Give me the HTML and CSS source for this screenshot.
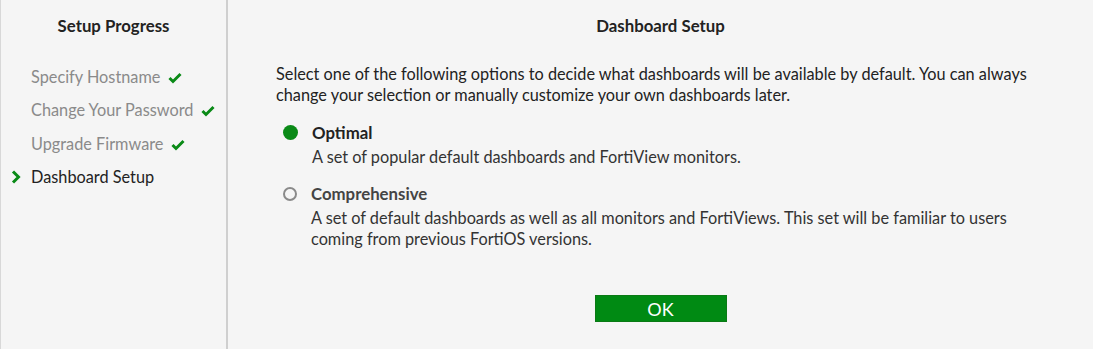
FILE: index.html
```html
<!DOCTYPE html>
<html lang="en">

<head>
  <meta charset="UTF-8">
  <meta name="viewport" content="width=device-width, initial-scale=1.0">
  <title>Dashboard Setup</title>
  <link rel="stylesheet" href="styles.css">
</head>

<body>
  <div class="wizard">
    <!-- Progress sidebar -->
    <aside class="progress">
      <h2 class="panel-title">Setup Progress</h2>
      <ul class="steps">
        <li class="step done">Specify Hostname
          <svg class="check" width="14" height="12" viewBox="0 0 14 12"><path d="M1.5 6 L5 9.5 L12.5 2" fill="none" stroke="#0a8a17" stroke-width="3"/></svg>
        </li>
        <li class="step done">Change Your Password
          <svg class="check" width="14" height="12" viewBox="0 0 14 12"><path d="M1.5 6 L5 9.5 L12.5 2" fill="none" stroke="#0a8a17" stroke-width="3"/></svg>
        </li>
        <li class="step done">Upgrade Firmware
          <svg class="check" width="14" height="12" viewBox="0 0 14 12"><path d="M1.5 6 L5 9.5 L12.5 2" fill="none" stroke="#0a8a17" stroke-width="3"/></svg>
        </li>
        <li class="step current">
          <svg class="chevron" width="10" height="14" viewBox="0 0 10 14"><path d="M2 1.5 L7.5 7 L2 12.5" fill="none" stroke="#0a8a17" stroke-width="3"/></svg>
          Dashboard Setup
        </li>
      </ul>
    </aside>

    <!-- Main content -->
    <main class="content">
      <h2 class="panel-title">Dashboard Setup</h2>
      <p class="intro">Select one of the following options to decide what dashboards will be available by default. You can always change your selection or manually customize your own dashboards later.</p>

      <div class="options">
        <label class="option">
          <span class="radio checked"></span>
          <span class="option-text">
            <span class="option-name">Optimal</span>
            <span class="option-desc">A set of popular default dashboards and FortiView monitors.</span>
          </span>
        </label>
        <label class="option">
          <span class="radio"></span>
          <span class="option-text">
            <span class="option-name">Comprehensive</span>
            <span class="option-desc">A set of default dashboards as well as all monitors and FortiViews. This set will be familiar to users coming from previous FortiOS versions.</span>
          </span>
        </label>
      </div>

      <div class="actions">
        <button class="ok-btn">OK</button>
      </div>
    </main>
  </div>
</body>

</html>
```

FILE: styles.css
```css
body {
  margin: 0;
  background: #f5f5f5;
  font-family: 'Lato', 'Open Sans', sans-serif;
  color: #333;
}

.wizard {
  display: flex;
  height: 349px;
  border-left: 1px solid #d8d8d8;
}

/* Sidebar */
.progress {
  width: 225px;
  flex-shrink: 0;
  border-right: 2px solid #cfcfcf;
}

.panel-title {
  margin: 0;
  padding-top: 16px;
  height: 20px;
  font-size: 16.8px;
  font-weight: bold;
  text-align: center;
  color: #222;
  line-height: 20px;
}

.steps {
  list-style: none;
  margin: 0;
  padding: 31px 0 0 30px;
}

.step {
  position: relative;
  font-size: 16.3px;
  line-height: 20px;
  height: 33.4px;
}

.step.done {
  color: #8a8a8a;
}

.step.current {
  color: #222;
}

.check {
  margin-left: 3px;
  vertical-align: -1px;
}

.chevron {
  position: absolute;
  left: -20px;
  top: 3px;
}

/* Main */
.content {
  flex: 1;
}

.intro {
  margin: 27px 40px 0 48px;
  font-size: 16.3px;
  line-height: 21px;
  color: #222;
}

.options {
  margin: 17px 0 0 55px;
}

.option {
  display: flex;
  margin-bottom: 16px;
}

.radio {
  width: 14px;
  height: 14px;
  box-sizing: border-box;
  border-radius: 50%;
  border: 2px solid #8a8a8a;
  margin: 4px 14px 0 0;
  flex-shrink: 0;
}

.radio.checked {
  border: none;
  background: #0a8a17;
  width: 15px;
  height: 15px;
  margin-top: 3px;
}

.option-text {
  display: flex;
  flex-direction: column;
  font-size: 16.3px;
  line-height: 21px;
  padding-right: 50px;
}

.option-name {
  font-size: 16.8px;
  font-weight: bold;
  color: #222;
  margin-bottom: 3px;
}

.radio:not(.checked) + .option-text .option-name {
  color: #444;
}

.option-desc {
  color: #333;
}

.actions {
  display: flex;
  justify-content: center;
  margin-top: 46px;
}

.ok-btn {
  width: 132px;
  height: 27px;
  background: #008a13;
  border: 1px solid #0a7a15;
  color: #fff;
  font-family: 'Lato', sans-serif;
  font-size: 18px;
  padding: 0;
  cursor: pointer;
}
```
